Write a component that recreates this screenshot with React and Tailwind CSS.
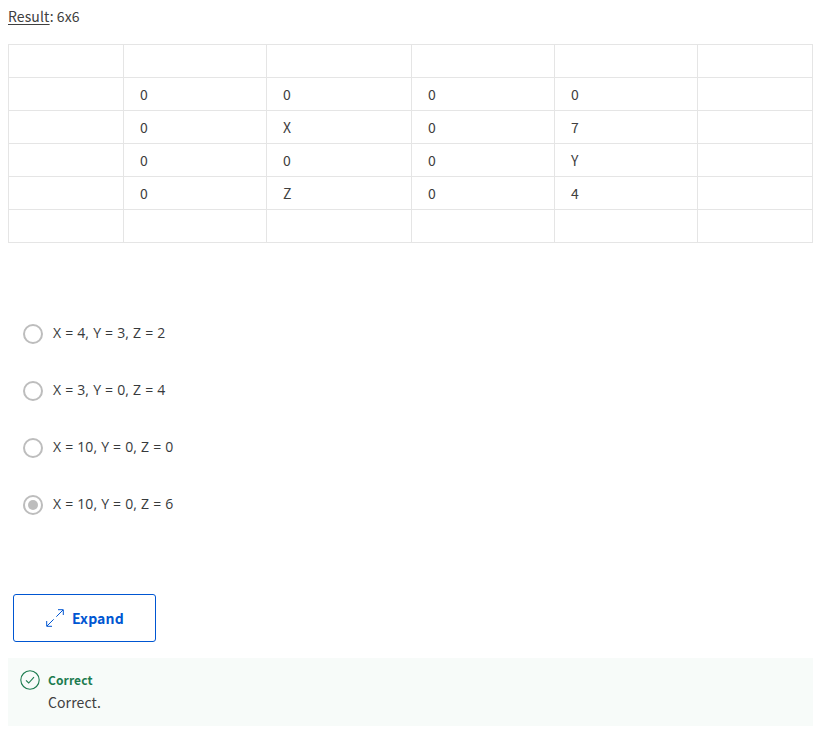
const rows = [
  ["", "", "", "", "", ""],
  ["", "0", "0", "0", "0", ""],
  ["", "0", "X", "0", "7", ""],
  ["", "0", "0", "0", "Y", ""],
  ["", "0", "Z", "0", "4", ""],
  ["", "", "", "", "", ""],
];

const options = [
  "X = 4, Y = 3, Z = 2",
  "X = 3, Y = 0, Z = 4",
  "X = 10, Y = 0, Z = 0",
  "X = 10, Y = 0, Z = 6",
];

function ResultTable() {
  return (
    <div className="mt-[18px] grid w-[805px] grid-cols-[115px_143px_145px_143px_143px_115px] border-l border-t border-[#e5e5e5] text-sm">
      {rows.flat().map((value, i) => (
        <div
          key={i}
          className="flex h-[33px] items-center border-b border-r border-[#e5e5e5] pl-4"
        >
          {value}
        </div>
      ))}
    </div>
  );
}

function Option({ label, checked }) {
  return (
    <label className="flex h-[57px] items-center">
      <span className="flex size-5 items-center justify-center rounded-full border-2 border-[#bdbdbd]">
        {checked && <span className="size-2.5 rounded-full bg-[#bdbdbd]" />}
      </span>
      <span className="ml-2.5 pb-0.5 font-['Open_Sans',sans-serif] text-sm leading-5 [word-spacing:0.5px] text-[#373a3c]">
        {label}
      </span>
    </label>
  );
}

export default function App() {
  return (
    <div className="h-[729px] w-[829px] overflow-hidden bg-white px-2 pt-1.5 font-['Noto_Sans_CJK_SC',sans-serif] text-[#404040]">
      <p className="h-5 text-sm leading-5 tracking-[0.1px]">
        <u className="underline-offset-2">Result</u>: 6x6
      </p>
      <ResultTable />
      <div className="mt-[62px] pl-[15px]">
        {options.map((label, i) => (
          <Option key={label} label={label} checked={i === 3} />
        ))}
      </div>
      <button className="ml-[5px] mt-[61px] flex h-12 w-[143px] items-center rounded-[3px] border border-[#0056d2] pl-8 text-sm font-bold text-[#0056d2]">
        <svg width="18" height="18" viewBox="0 0 18 18" fill="none" stroke="currentColor" strokeWidth="1">
          <path d="M.7 12v5.3H6M1 17l6.7-6.7M12 .7h5.3V6M17 1l-6.7 6.7" />
        </svg>
        <span className="ml-2 tracking-[0.15px]">Expand</span>
      </button>
      <div className="mt-4 flex h-[68px] w-[805px] bg-[#f7fbf9] pl-3 pt-3">
        <svg className="shrink-0" width="20" height="20" viewBox="0 0 20 20" fill="none" stroke="#1d7c50">
          <circle cx="10" cy="10" r="9.2" strokeWidth="1.1" />
          <path d="m6 10.3 2.7 2.7L14 7.2" strokeWidth="1.1" />
        </svg>
        <div className="ml-2">
          <p className="text-xs font-bold leading-5 tracking-[0.1px] text-[#1d7c50]">Correct</p>
          <p className="text-sm leading-6 tracking-[0.1px]">Correct.</p>
        </div>
      </div>
    </div>
  );
}
